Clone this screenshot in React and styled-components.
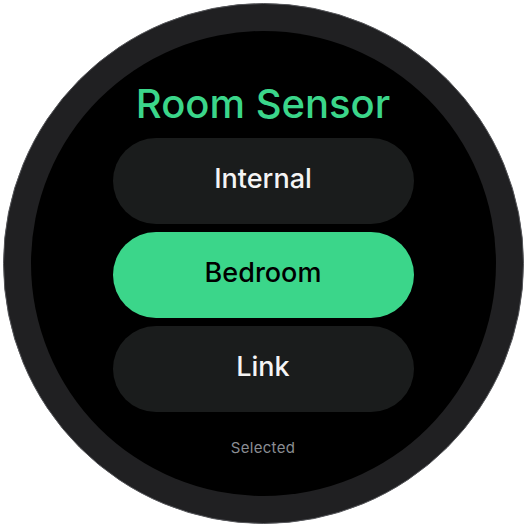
import React from "react";
import styled, { createGlobalStyle } from "styled-components";

const Global = createGlobalStyle`
  html, body { margin: 0; padding: 0; background: #ffffff; }
  * { box-sizing: border-box; }
`;

const Page = styled.div`
  width: 526px;
  height: 526px;
  display: flex;
  align-items: center;
  justify-content: center;
`;

const Bezel = styled.div`
  width: 521px;
  height: 521px;
  border-radius: 50%;
  background: #202022;
  border: 1.5px solid #55565a;
  display: flex;
  align-items: center;
  justify-content: center;
`;

const Screen = styled.div`
  width: 465px;
  height: 465px;
  border-radius: 50%;
  background: #000000;
  display: flex;
  flex-direction: column;
  align-items: center;
  padding-top: 49px;
  font-family: "Inter", "Roboto", sans-serif;
`;

const Title = styled.h1`
  margin: 0 0 10px;
  font-size: 40px;
  line-height: 48px;
  font-weight: 500;
  color: #3bd68a;
  letter-spacing: 0;
`;

const List = styled.div`
  display: flex;
  flex-direction: column;
  gap: 8px;
`;

const Chip = styled.button`
  width: 301px;
  height: 86px;
  border: none;
  border-radius: 43px;
  background: ${(p) => (p.$selected ? "#3bd68a" : "#1a1c1c")};
  color: ${(p) => (p.$selected ? "#000000" : "#f4f4f4")};
  font-family: "Inter", "Roboto", sans-serif;
  font-size: 27px;
  font-weight: 500;
  display: flex;
  align-items: center;
  justify-content: center;
  padding: 0 0 4px;
  cursor: pointer;
`;

const Caption = styled.div`
  margin-top: 27px;
  font-size: 15px;
  line-height: 18px;
  color: #8a8d93;
  letter-spacing: 0.3px;
`;

const options = ["Internal", "Bedroom", "Link"];

export default function App() {
  const selected = "Bedroom";
  return (
    <>
      <Global />
      <Page>
        <Bezel>
          <Screen>
            <Title>Room Sensor</Title>
            <List>
              {options.map((o) => (
                <Chip key={o} $selected={o === selected}>
                  {o}
                </Chip>
              ))}
            </List>
            <Caption>Selected</Caption>
          </Screen>
        </Bezel>
      </Page>
    </>
  );
}
